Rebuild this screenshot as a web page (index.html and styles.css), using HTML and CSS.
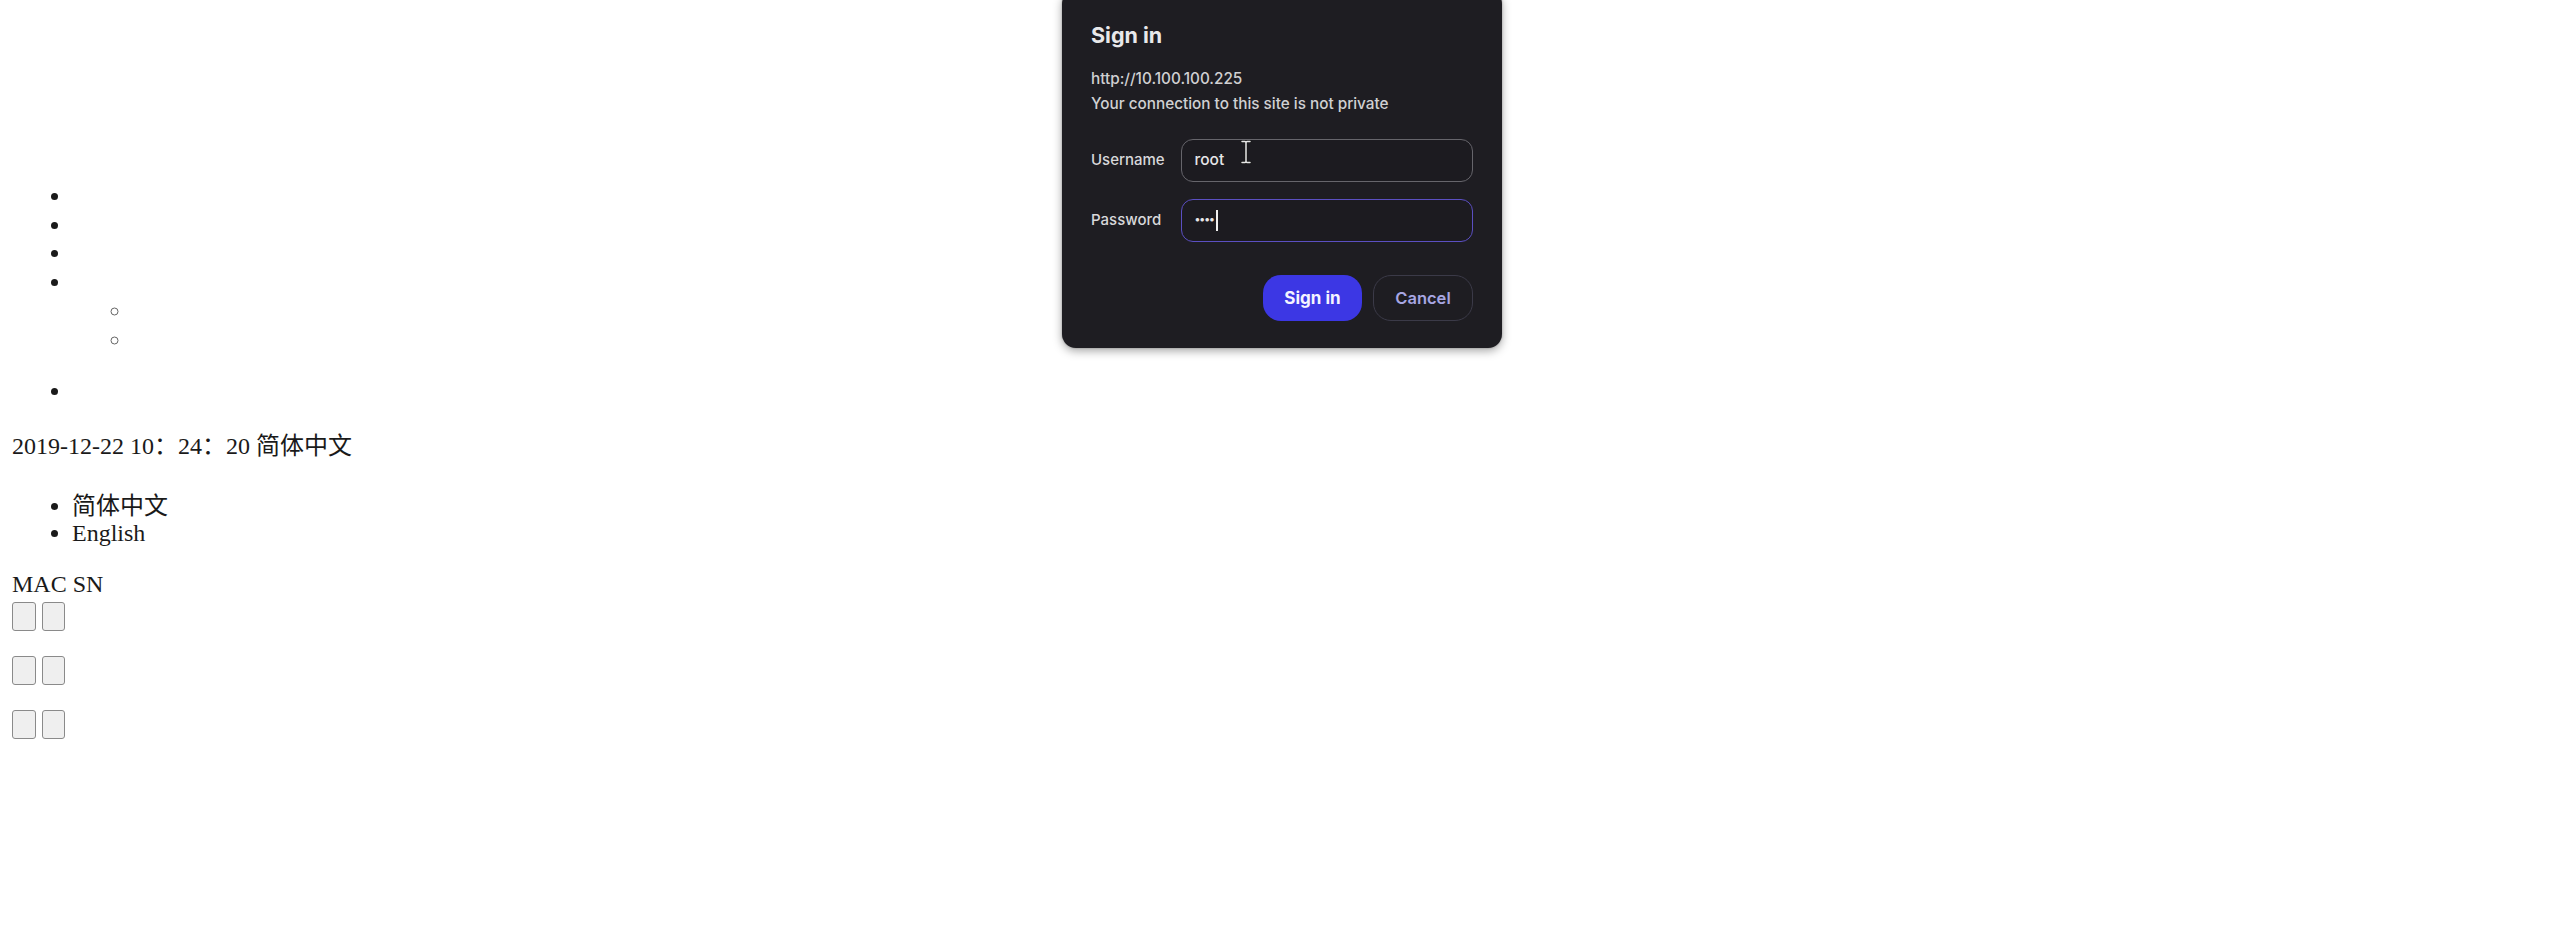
FILE: index.html
```html
<!DOCTYPE html>
<html lang="zh-CN">
<head>
<meta charset="utf-8">
<title>Sign in</title>
<link rel="stylesheet" href="styles.css">
</head>
<body>
<ul class="nav">
  <li></li>
  <li></li>
  <li></li>
  <li><span class="nav-label"></span>
    <ul class="sub">
      <li></li>
      <li></li>
    </ul>
  </li>
  <li></li>
</ul>
<div class="datetime">2019-12-22 10：24：20 简体中文</div>
<ul class="lang">
  <li>简体中文</li>
  <li>English</li>
</ul>
<div class="info">MAC SN</div>
<div class="btn-row first"><button class="empty-btn"></button><button class="empty-btn"></button></div>
<div class="btn-row"><button class="empty-btn"></button><button class="empty-btn"></button></div>
<div class="btn-row"><button class="empty-btn"></button><button class="empty-btn"></button></div>

<div class="dialog">
  <div class="dlg-title">Sign in</div>
  <div class="dlg-text">http://10.100.100.225</div>
  <div class="dlg-text">Your connection to this site is not private</div>
  <div class="field first-field">
    <div class="field-label">Username</div>
    <div class="field-input">root</div>
  </div>
  <div class="field second-field">
    <div class="field-label">Password</div>
    <div class="field-input focused"><span class="dots">••••</span><span class="caret"></span></div>
  </div>
  <div class="dlg-actions">
    <button class="dlg-btn primary">Sign in</button>
    <button class="dlg-btn secondary">Cancel</button>
  </div>
  <svg class="ibeam" width="14" height="26" viewBox="0 0 14 26">
    <path d="M3 2.5 H6 Q7 2.5 7 4 V22 Q7 23.5 6 23.5 H3 M11 2.5 H8 Q7 2.5 7 4 M7 22 Q7 23.5 8 23.5 H11" fill="none" stroke="#1a1a1a" stroke-width="3.2" stroke-linecap="round"/>
    <path d="M3 2.5 H6 Q7 2.5 7 4 V22 Q7 23.5 6 23.5 H3 M11 2.5 H8 Q7 2.5 7 4 M7 22 Q7 23.5 8 23.5 H11" fill="none" stroke="#e6e6e6" stroke-width="1.5" stroke-linecap="round"/>
  </svg>
</div>
</body>
</html>
```

FILE: styles.css
```css
html, body {
  background: #ffffff;
}
body {
  margin: 0;
  padding: 0 12px;
  font-family: "Liberation Serif", "Noto Sans CJK SC", serif;
  font-size: 24px;
  line-height: 27.6px;
  color: #1a1a1a;
}

.nav {
  margin: 182px 0 0;
  padding-left: 60px;
  line-height: 28.7px;
  list-style: disc;
}
.nav li {
  min-height: 28.7px;
}
.nav-label {
  display: inline-block;
  vertical-align: top;
  width: 0;
  height: 0;
}
.sub {
  margin: 0 0 23px;
  padding-left: 60px;
  list-style: circle;
}
.sub li::marker {
  color: #666;
}

.datetime {
  margin-top: 26.6px;
}

.lang {
  margin: 32.4px 0 0;
  padding-left: 60px;
}

.info {
  margin-top: 23.7px;
}

.btn-row {
  display: flex;
  gap: 6px;
  margin-top: 25px;
}
.btn-row.first {
  margin-top: 3px;
}
.empty-btn {
  width: 23.5px;
  height: 29px;
  padding: 0;
  background: #efefef;
  border: 1.5px solid #8a8a8a;
  border-radius: 3px;
}

/* dialog overlay */
.dialog {
  position: absolute;
  left: 1062px;
  top: -10px;
  width: 440px;
  height: 358px;
  box-sizing: border-box;
  padding: 31.8px 29px 0;
  background: #1e1d22;
  border-radius: 14px;
  box-shadow: 0 3px 10px rgba(0, 0, 0, 0.35), 0 0 2px rgba(0, 0, 0, 0.3);
  font-family: Inter, "Noto Sans", sans-serif;
  color: #d6d6d8;
}
.dlg-title {
  font-size: 21.5px;
  font-weight: 700;
  line-height: 26px;
  color: #e8e8ea;
  margin-bottom: 18.2px;
}
.dlg-text {
  font-size: 15.3px;
  font-weight: 500;
  line-height: 25px;
  color: #d0d0d2;
}
.field {
  display: grid;
  grid-template-columns: 90px 1fr;
  align-items: center;
}
.first-field {
  margin-top: 22.7px;
}
.second-field {
  margin-top: 17px;
}
.field-label {
  font-size: 15px;
  font-weight: 500;
  color: #d8d8da;
}
.field-input {
  height: 43px;
  box-sizing: border-box;
  border: 1.5px solid #66656b;
  border-radius: 12px;
  padding: 0 12.5px;
  display: flex;
  align-items: center;
  font-size: 15.5px;
  font-weight: 500;
  color: #e6e6e8;
  background: #1c1b20;
}
.field-input.focused {
  border-color: #5b4fc2;
}
.dots {
  font-size: 11px;
  letter-spacing: -1px;
  color: #e6e6e8;
}
.caret {
  display: inline-block;
  width: 1.6px;
  height: 21px;
  margin-left: 2px;
  background: #f0f0f0;
}
.dlg-actions {
  display: flex;
  justify-content: flex-end;
  gap: 11px;
  margin-top: 33px;
}
.dlg-btn {
  height: 46px;
  box-sizing: border-box;
  border-radius: 18px;
  font-family: Inter, "Noto Sans", sans-serif;
  padding: 0;
}
.dlg-btn.primary {
  width: 99px;
  background: #3c37e4;
  border: none;
  color: #f4f4ff;
  font-size: 17px;
  font-weight: 700;
}
.dlg-btn.secondary {
  width: 100px;
  background: transparent;
  border: 1.5px solid #3b3a48;
  color: #a7a6e2;
  font-size: 16.5px;
  font-weight: 600;
}
.ibeam {
  position: absolute;
  left: 177px;
  top: 149px;
}
```
